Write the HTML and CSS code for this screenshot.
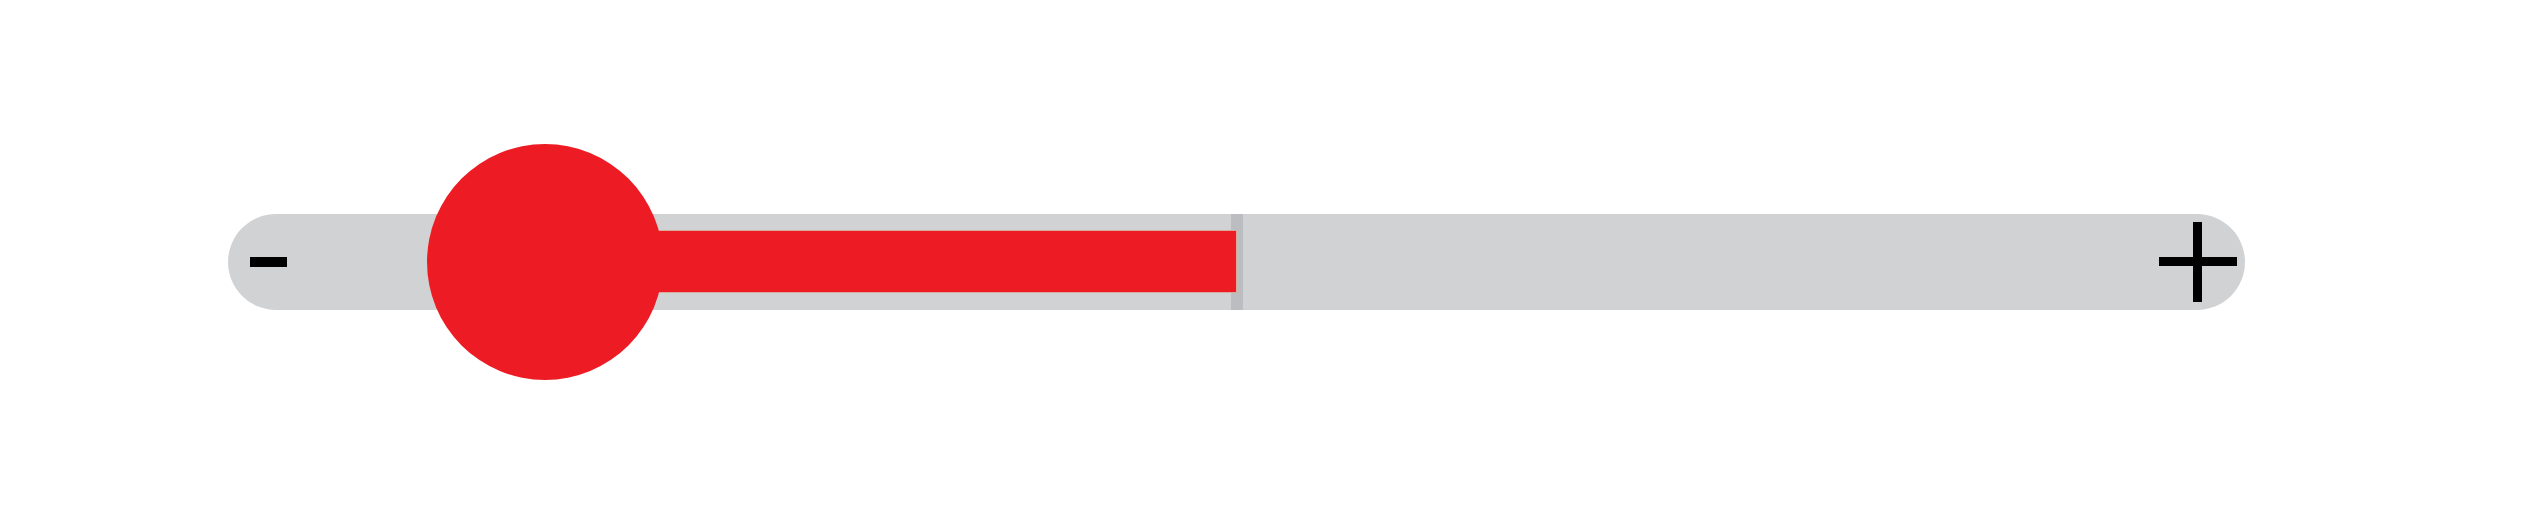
FILE: index.html
```html
<!DOCTYPE html>
<html lang="en">
<head>
<meta charset="utf-8">
<title>Slider</title>
<link rel="stylesheet" href="styles.css">
</head>
<body>
<div class="stage">
  <div class="track">
    <svg class="icon-minus" width="37" height="10" viewBox="0 0 37 10"><rect x="0" y="0" width="37" height="10" fill="#000"/></svg>
    <span class="divider"></span>
    <span class="fill"></span>
    <span class="thumb"></span>
    <svg class="icon-plus" width="78" height="80" viewBox="0 0 78 80"><rect x="0" y="35" width="78" height="9" fill="#000"/><rect x="34" y="0" width="9" height="80" fill="#000"/></svg>
  </div>
</div>
</body>
</html>
```

FILE: styles.css
```css
html, body {
  margin: 0;
  background: #ffffff;
}
.stage {
  width: 2525px;
  height: 519px;
  box-sizing: border-box;
  padding: 214px 0 0 228px;
}
.track {
  position: relative;
  width: 2017px;
  height: 96px;
  border-radius: 48px;
  background: #d1d2d4;
  display: flex;
  align-items: center;
  justify-content: space-between;
  padding: 0 8px 0 22px;
  box-sizing: border-box;
}
.icon-minus {
  display: block;
  margin-top: -1px;
}
.icon-plus {
  display: block;
}
.divider {
  position: absolute;
  left: 1003px;
  top: 0;
  width: 12px;
  height: 96px;
  background: #bcbdc0;
}
.fill {
  position: absolute;
  left: 317px;
  top: 16px;
  width: 692px;
  height: 63px;
  box-sizing: border-box;
  background: #ed1c24;
  border: 1px solid #d9aa9c;
  border-left: none;
}
.thumb {
  position: absolute;
  left: 199px;
  top: -70px;
  width: 236px;
  height: 236px;
  border-radius: 50%;
  background: #ed1c24;
}
```
